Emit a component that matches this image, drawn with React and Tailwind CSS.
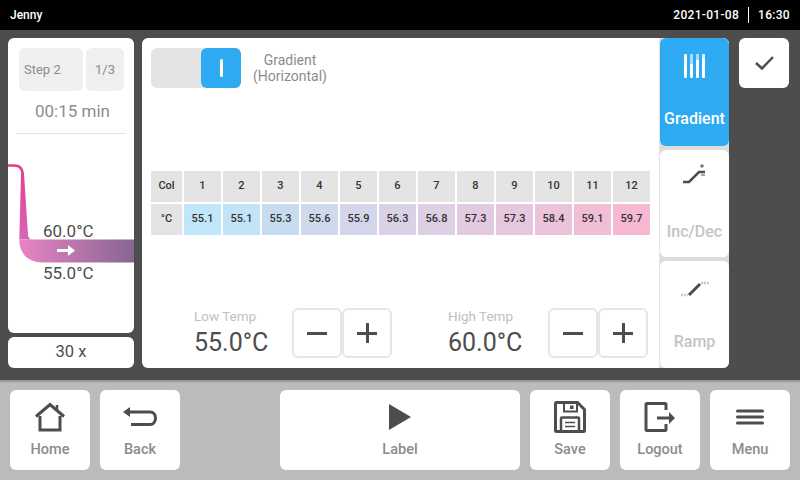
const font = { fontFamily: "Roboto, sans-serif" };

const columns = [
  ["1", "55.1", "bg-[#bfe6f9]"],
  ["2", "55.1", "bg-[#c3e3f6]"],
  ["3", "55.3", "bg-[#c7dcf1]"],
  ["4", "55.6", "bg-[#cfd9ed]"],
  ["5", "55.9", "bg-[#d4d5ea]"],
  ["6", "56.3", "bg-[#d9d2e7]"],
  ["7", "56.8", "bg-[#ddcfe4]"],
  ["8", "57.3", "bg-[#e2cbe1]"],
  ["9", "57.3", "bg-[#e6c8de]"],
  ["10", "58.4", "bg-[#ebc3da]"],
  ["11", "59.1", "bg-[#f0bfd6]"],
  ["12", "59.7", "bg-[#f6b9d1]"],
];

function HomeIcon() {
  return (
    <svg width="32" height="32" viewBox="0 0 32 32" fill="none" stroke="#4d4d4d" strokeWidth="3">
      <path d="M2 15.500 16 3.500l14 12" />
      <path d="M6 15v14h20V15" />
      <path d="M23 4v5" strokeWidth="2.500" />
    </svg>
  );
}

function BackIcon() {
  return (
    <svg width="36" height="24" viewBox="0 0 36 24" fill="none" stroke="#4d4d4d" strokeWidth="3">
      <path d="M6 7h22c3.500 0 5.500 2.500 5.500 6s-2 6.500-5.500 6.500H9" />
      <path d="M1 7l7-5v10z" fill="#4d4d4d" stroke="none" />
    </svg>
  );
}

function PlayIcon() {
  return (
    <svg width="24" height="28" viewBox="0 0 24 28">
      <path d="M1 1l22 13L1 27z" fill="#4d4d4d" />
    </svg>
  );
}

function SaveIcon() {
  return (
    <svg width="32" height="32" viewBox="0 0 32 32" fill="none" stroke="#4d4d4d" strokeWidth="3">
      <path d="M2.500 1.500h21l7 7v21a1 1 0 0 1-1 1h-27a1 1 0 0 1-1-1v-27a1 1 0 0 1 1-1z" />
      <path d="M7 30V17.500a1 1 0 0 1 1-1h16a1 1 0 0 1 1 1V30" strokeWidth="2.500" />
      <path d="M11 21.500h10M11 25.500h10" strokeWidth="1.500" />
      <path d="M10 2v8.500h13V2" strokeWidth="2" />
      <rect x="16" y="4.500" width="3.500" height="3.500" fill="#4d4d4d" stroke="none" />
    </svg>
  );
}

function LogoutIcon() {
  return (
    <svg width="32" height="32" viewBox="0 0 32 32" fill="none" stroke="#4d4d4d" strokeWidth="3">
      <path d="M22 9V3.500a1 1 0 0 0-1-1H3a1 1 0 0 0-1 1v25a1 1 0 0 0 1 1h18a1 1 0 0 0 1-1V23" />
      <path d="M13 17h13" />
      <path d="M25 11l6 6-6 6z" fill="#4d4d4d" stroke="none" />
    </svg>
  );
}

function MenuIcon() {
  return (
    <svg width="28" height="16" viewBox="0 0 28 16" fill="none" stroke="#4d4d4d" strokeWidth="3" strokeLinecap="round">
      <path d="M1.500 2h25M1.500 8h25M1.500 14h25" />
    </svg>
  );
}

function NavButton({ icon, label, wide }) {
  return (
    <button className={`${wide ? "w-[240px]" : "w-[80px]"} h-[80px] bg-white rounded-md flex flex-col items-center`}>
      <div className="h-[48px] flex items-center justify-center pt-[5px]">{icon}</div>
      <span className="mt-[2px] text-[14.500px] leading-[20px] font-medium text-[#8c8c8c]">{label}</span>
    </button>
  );
}

function StepCurve() {
  return (
    <svg width="126" height="295" viewBox="8 38 126 295" className="absolute left-0 top-0">
      <defs>
        <linearGradient id="drop" x1="0" y1="0" x2="0" y2="1">
          <stop offset="0" stopColor="#e8388c" />
          <stop offset="1" stopColor="#d668b4" />
        </linearGradient>
        <linearGradient id="band" x1="0" y1="0" x2="1" y2="0">
          <stop offset="0" stopColor="#e884c4" />
          <stop offset="1" stopColor="#866691" />
        </linearGradient>
      </defs>
      <path d="M8 164.300h6c6 0 9.500 3 10 9.500l4 61c.2 2 1 3.500 3 4.700H19.300l1.700-66c.2-4-2-6.800-7-6.800H8z" fill="url(#drop)" />
      <path d="M19.300 240c0 14 9 22.500 24 22.500H134v-23H19.300z" fill="url(#band)" />
      <path d="M57 250.500h15" stroke="#fff" strokeWidth="3" />
      <path d="M68 245l7 5.500-7 5.500z" fill="#fff" />
    </svg>
  );
}

function TempControl({ label, value, labelClass }) {
  return (
    <div className="flex items-center">
      <div className={labelClass}>
        <div className="-mt-[2px] text-[13.500px] leading-[16px] text-[#c0c0c0]">{label}</div>
        <div className="mt-[5px] text-[25px] leading-[28px] text-[#4d4d4d]">{value}</div>
      </div>
      <div className="flex">
        <button className="w-[50px] h-[50px] border-2 border-[#e6e6e6] rounded-md flex items-center justify-center">
          <span className="w-[20px] h-[3px] bg-[#4d4d4d]" />
        </button>
        <button className="relative w-[50px] h-[50px] border-2 border-[#e6e6e6] rounded-md flex items-center justify-center">
          <span className="w-[20px] h-[3px] bg-[#4d4d4d]" />
          <span className="absolute w-[3px] h-[20px] bg-[#4d4d4d]" />
        </button>
      </div>
    </div>
  );
}

export default function App() {
  return (
    <div className="w-[800px] h-[480px] flex flex-col overflow-hidden" style={font}>
      <header className="h-[30px] bg-black text-white flex items-center justify-between pl-[10px] pr-[10px] font-medium">
        <span className="text-[12px]">Jenny</span>
        <div className="flex items-center text-[12px] tracking-[0.3px]">
          <span>2021-01-08</span>
          <span className="w-px h-[16px] bg-white mx-[9px]" />
          <span>16:30</span>
        </div>
      </header>

      <main className="h-[350px] bg-[#4d4d4d] flex pl-[8px] pt-[8px]">
        <div className="w-[126px] flex flex-col gap-[4px]">
          <div className="relative h-[295px] bg-white rounded-md overflow-hidden">
            <div className="flex gap-[3px] pt-[10px] pl-[11px]">
              <div className="w-[64px] h-[43px] bg-[#efefef] rounded-md flex items-center pl-[5px] text-[13px] text-[#8c8c8c]">Step 2</div>
              <div className="w-[38px] h-[43px] bg-[#efefef] rounded-md flex items-center justify-center text-[13px] text-[#8c8c8c]">1/3</div>
            </div>
            <div className="mt-[10px] pl-[3px] text-center text-[17px] leading-[20px] text-[#8c8c8c]">00:15 min</div>
            <div className="mt-[12px] mx-[8px] h-px bg-[#e4e4e4]" />
            <StepCurve />
            <div className="absolute left-[35px] top-[183px] text-[17px] leading-[20px] text-[#4d4d4d]">60.0°C</div>
            <div className="absolute left-[35px] top-[225px] text-[17px] leading-[20px] text-[#4d4d4d]">55.0°C</div>
          </div>
          <div className="h-[31px] bg-white rounded-md flex items-center justify-center text-[16.500px] text-[#4d4d4d]">30 x</div>
        </div>

        <div className="ml-[8px] w-[587px] h-[330px] bg-white rounded-md flex overflow-hidden">
          <div className="w-[518px] border-r border-[#e4e4e4] flex flex-col">
            <div className="flex items-center pl-[9px] pt-[10px]">
              <div className="w-[90px] h-[40px] bg-[#e4e4e4] rounded-md flex justify-end">
                <div className="w-[40px] h-[40px] bg-[#2eaaf2] rounded-md flex items-center justify-center">
                  <span className="w-[3px] h-[18px] bg-white rounded-sm" />
                </div>
              </div>
              <div className="ml-[12px] w-[74px] whitespace-nowrap text-center text-[14px] leading-[16px] text-[#8c8c8c]">
                Gradient
                <br />
                (Horizontal)
              </div>
            </div>

            <div className="mt-[83px] ml-[9px] grid grid-cols-[31px_repeat(12,37px)] grid-rows-[31px_31px] gap-[2px] text-[11px] font-medium text-[#333]">
              <div className="bg-[#e4e4e4] flex items-center justify-center">Col</div>
              {columns.map(([col]) => (
                <div key={col} className="bg-[#e4e4e4] flex items-center justify-center">{col}</div>
              ))}
              <div className="bg-[#e4e4e4] flex items-center justify-center">°C</div>
              {columns.map(([col, temp, bg]) => (
                <div key={col} className={`${bg} flex items-center justify-center`}>{temp}</div>
              ))}
            </div>

            <div className="mt-[73px] flex">
              <TempControl label="Low Temp" value="55.0°C" labelClass="ml-[52px] w-[98px]" />
              <TempControl label="High Temp" value="60.0°C" labelClass="ml-[56px] w-[100px]" />
            </div>
          </div>

          <div className="w-[69px] bg-[#dcdcdc] flex flex-col gap-[4px]">
            <div className="h-[108px] bg-[#2eaaf2] rounded-md flex flex-col items-center">
              <svg width="22" height="24" viewBox="0 0 22 24" className="mt-[16px] ml-[1px]">
                <rect x="0" y="0" width="3" height="24" rx="1" fill="#fff" />
                <rect x="6" y="0" width="3" height="24" rx="1" fill="#fff" />
                <rect x="12" y="0" width="3" height="24" rx="1" fill="#fff" />
                <rect x="18" y="0" width="3" height="24" rx="1" fill="#fff" />
                <rect x="6" y="0" width="3" height="10" fill="#a8dcfa" />
                <rect x="12" y="0" width="3" height="6" fill="#a8dcfa" />
                <rect x="18" y="0" width="3" height="4" fill="#d8f0fd" />
              </svg>
              <span className="mt-[31px] text-[16px] leading-[20px] font-medium text-white">Gradient</span>
            </div>
            <div className="h-[107px] bg-white rounded-md flex flex-col items-center">
              <svg width="26" height="22" viewBox="0 0 26 22" className="mt-[13px]" fill="none" stroke="#4d4d4d">
                <path d="M1 19h6L17 9h6" strokeWidth="2.500" />
                <path d="M18 3h4M20 1v4M19 12h4" strokeWidth="1" />
              </svg>
              <span className="mt-[37px] text-[16px] leading-[20px] font-medium text-[#c4c4c4]">Inc/Dec</span>
            </div>
            <div className="h-[107px] bg-white rounded-md flex flex-col items-center">
              <svg width="30" height="20" viewBox="0 0 30 20" className="mt-[17px]" fill="none">
                <path d="M9 17L20 6" stroke="#4d4d4d" strokeWidth="3" />
                <path d="M1 17h7M21 5h8" stroke="#c8c8c8" strokeWidth="2.500" strokeDasharray="2 1" />
              </svg>
              <span className="mt-[34px] text-[16px] leading-[20px] font-medium text-[#c4c4c4]">Ramp</span>
            </div>
          </div>
        </div>

        <button className="ml-[10px] w-[50px] h-[50px] bg-white rounded-md flex items-center justify-center">
          <svg width="21" height="16" viewBox="0 0 20 16" fill="none" stroke="#4d4d4d" strokeWidth="2.500">
            <path d="M1.500 8l6 5.500L18.500 2" />
          </svg>
        </button>
      </main>

      <footer className="relative h-[100px] bg-[#bbbbbb] flex items-center pl-[10px] gap-[10px]">
        <div className="absolute inset-x-0 top-0 h-[3px] bg-gradient-to-b from-[#8a8a8a] to-[#bbbbbb]" />
        <NavButton icon={<HomeIcon />} label="Home" />
        <NavButton icon={<BackIcon />} label="Back" />
        <div className="w-[80px]" />
        <NavButton icon={<PlayIcon />} label="Label" wide />
        <NavButton icon={<SaveIcon />} label="Save" />
        <NavButton icon={<LogoutIcon />} label="Logout" />
        <NavButton icon={<MenuIcon />} label="Menu" />
      </footer>
    </div>
  );
}
